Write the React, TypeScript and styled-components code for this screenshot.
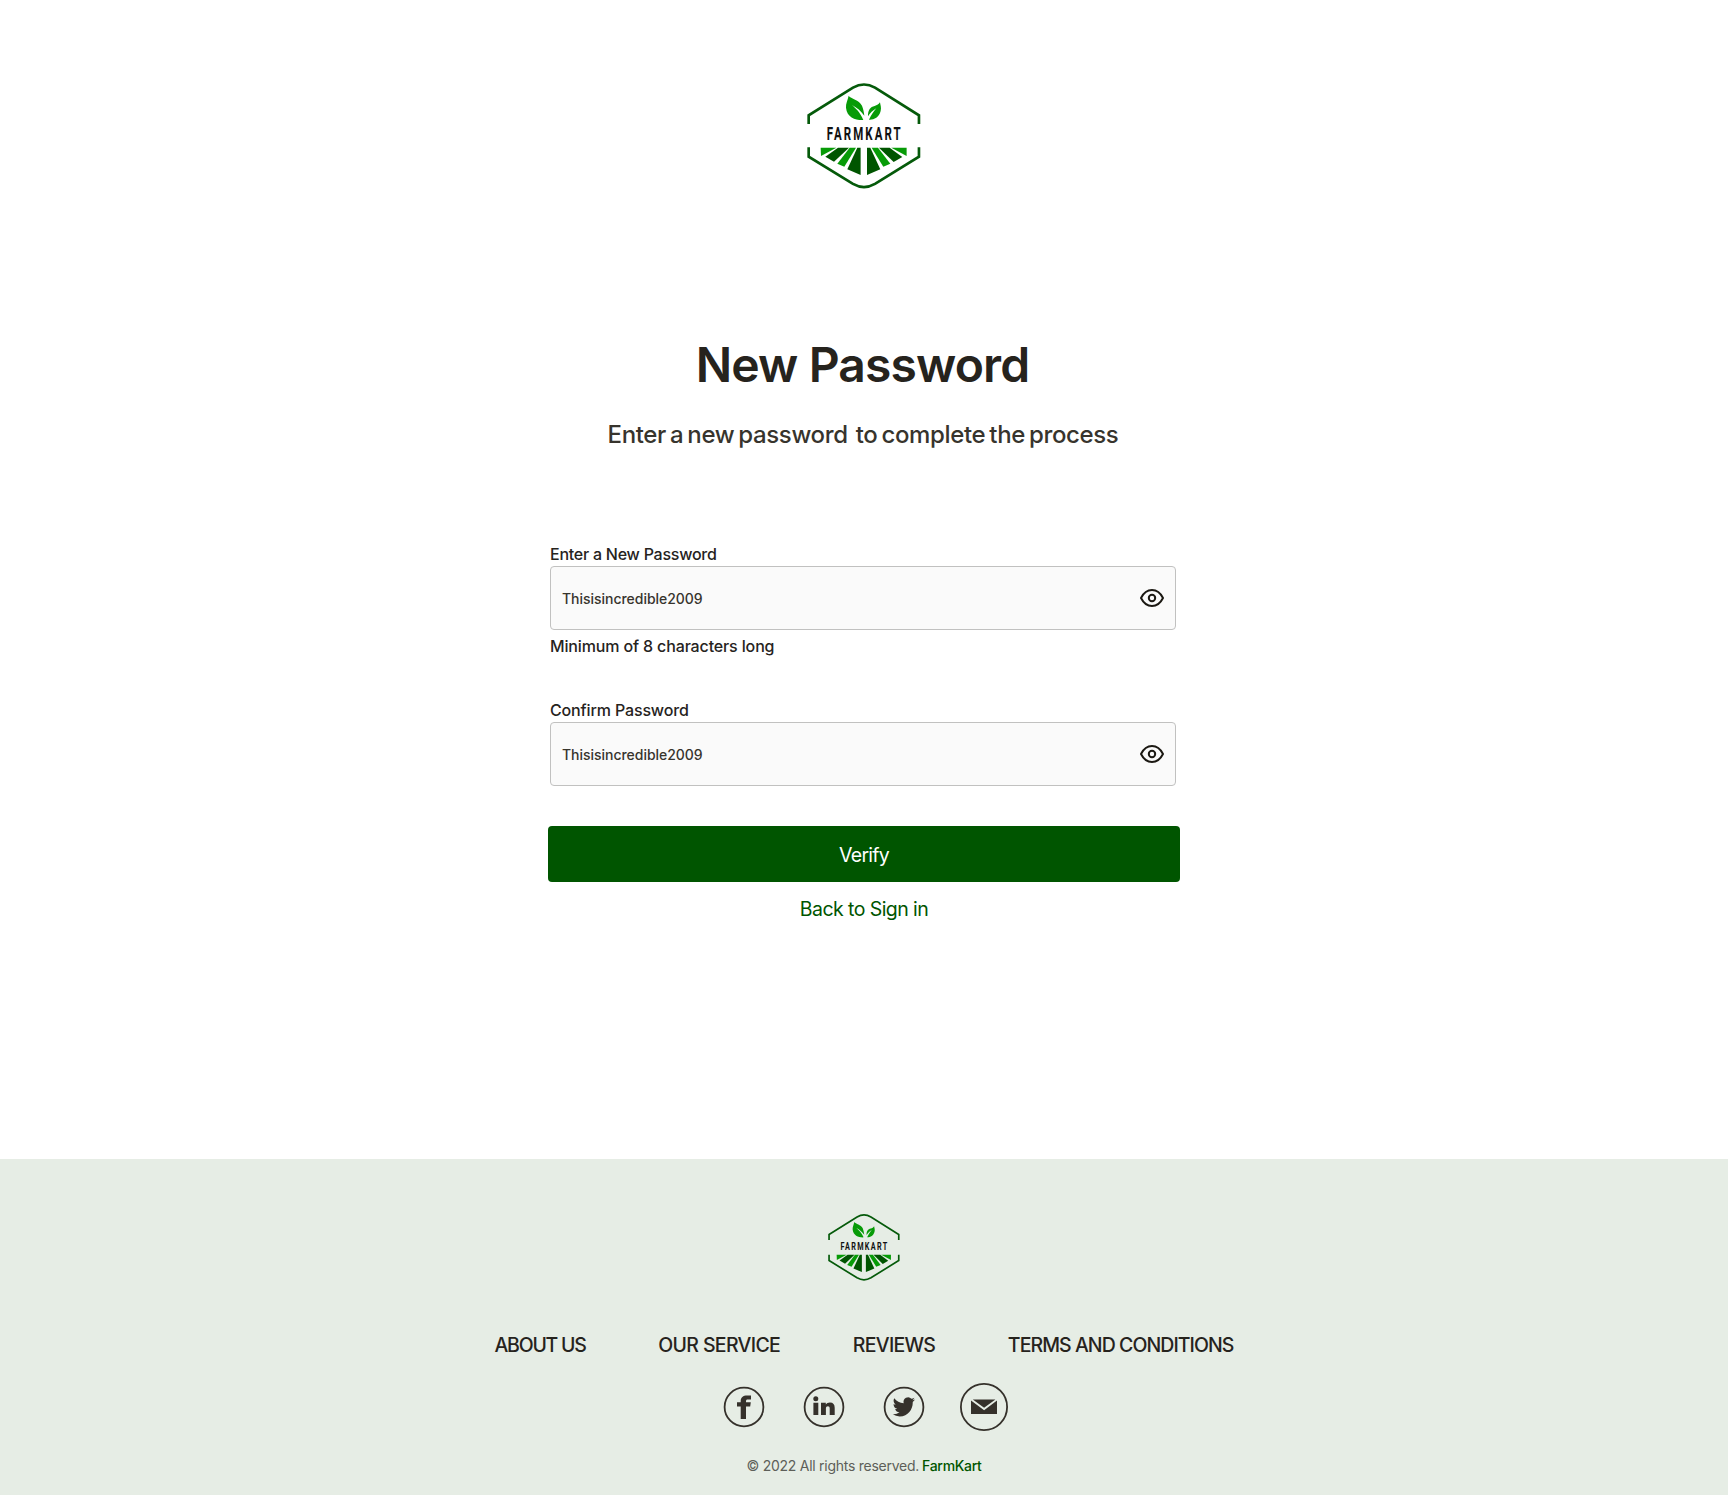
import React from "react";
import styled, { createGlobalStyle } from "styled-components";

const GlobalStyle = createGlobalStyle`
  *, *::before, *::after { box-sizing: border-box; }
  body {
    margin: 0;
    background: #fff;
    font-family: Inter, "Liberation Sans", sans-serif;
    color: #26231d;
  }
`;

const Page = styled.div`
  display: flex;
  flex-direction: column;
  align-items: center;
  width: 100%;
  min-height: 1495px;
`;

const Main = styled.main`
  display: flex;
  flex-direction: column;
  align-items: center;
  width: 632px;
  height: 1159px;
  padding-top: 83px;
`;

const LogoSvg = styled.svg<{ $width: number }>`
  display: block;
  flex: none;
  width: ${(p) => p.$width}px;
  aspect-ratio: 340 / 318;
`;

const Title = styled.h1`
  margin: 143px 3px 0 0;
  font-size: 48px;
  font-weight: 600;
  line-height: 66px;
  letter-spacing: -0.88px;
  white-space: nowrap;
`;

const Subtitle = styled.p`
  margin: 20px 2px 0 0;
  font-size: 24px;
  font-weight: 500;
  line-height: 33px;
  letter-spacing: -0.36px;
  word-spacing: -2px;
  white-space: pre;
  color: #37342d;
`;

const Form = styled.form`
  display: flex;
  flex-direction: column;
  align-items: center;
  width: 100%;
  margin-top: 92px;
`;

const Field = styled.div<{ $gap: number }>`
  display: flex;
  flex-direction: column;
  width: 626px;
  margin: 0 4px 0 2px;
  padding-bottom: ${(p) => p.$gap}px;
`;

const Caption = styled.label<{ $spacing: number }>`
  height: 23px;
  font-size: 16px;
  font-weight: 500;
  line-height: 22px;
  letter-spacing: ${(p) => p.$spacing}px;
`;

const Hint = styled(Caption).attrs({ as: "span" })`
  margin-top: 5px;
`;

const InputBox = styled.div`
  display: flex;
  align-items: center;
  justify-content: space-between;
  height: 64px;
  padding: 0 11px;
  border: 1px solid #c1c1c0;
  border-radius: 4px;
  background: #fafafa;
`;

const Value = styled.span`
  padding-top: 1px;
  font-size: 14px;
  font-weight: 500;
  line-height: 19px;
  letter-spacing: -0.03px;
  color: #37342d;
`;

const Eye = styled.svg`
  display: block;
  width: 24px;
  height: 24px;
  fill: none;
  stroke: #1b1812;
  stroke-width: 2;
  stroke-linejoin: round;
`;

const Submit = styled.button`
  width: 632px;
  height: 56px;
  padding: 3px 0 0;
  border: 0;
  border-radius: 4px;
  background: #005500;
  color: #fff;
  font: 400 19.5px/27px Inter, "Liberation Sans", sans-serif;
  letter-spacing: -0.75px;
`;

const BackLink = styled.a`
  margin-top: 14px;
  font-size: 19.5px;
  line-height: 27px;
  letter-spacing: -0.57px;
  color: #005500;
`;

const FooterBar = styled.footer`
  display: flex;
  flex-direction: column;
  align-items: center;
  width: 100%;
  height: 336px;
  padding-top: 55px;
  background: #e6ede5;
`;

const Nav = styled.nav`
  display: flex;
  gap: 72.6px;
  margin-top: 51px;
`;

const NavLink = styled.a<{ $spacing: number }>`
  font-size: 19.5px;
  font-weight: 500;
  line-height: 27px;
  letter-spacing: ${(p) => p.$spacing}px;
  white-space: nowrap;
`;

const Socials = styled.div`
  display: flex;
  gap: 32px;
  margin-top: 24px;
`;

const SocialIcon = styled.svg`
  display: block;
  width: 48px;
  height: 48px;
  fill: #35312b;
`;

const Copyright = styled.p`
  display: flex;
  gap: 3px;
  margin: 25px 0 0;
  font-size: 14px;
  line-height: 19px;
  letter-spacing: -0.26px;
  color: #5d5f59;
`;

const Brand = styled.span`
  font-weight: 500;
  letter-spacing: -0.307px;
  color: #005500;
`;

function Logo({ width }: { width: number }) {
  return (
    <LogoSvg $width={width} viewBox="40 38 340 318" aria-label="FarmKart">
      <g fill="none" stroke="#055a0a" strokeWidth="8">
        <path d="M45 161V135L178 52Q211 33 244 52L376 135V161" />
        <path d="M45 231V259L178 341Q211 360 244 341L376 259V231" />
      </g>
      <g fill="#079b07">
        <path d="M165 76C172 86 196 88 205 106C209 116 211 126 212 136C202 122 190 112 175 104C186 114 200 126 209 149C186 150 160 142 157 112C156 100 162 90 165 76Z" />
        <path d="M259 96C260 104 264 112 261 122C256 142 240 149 226 148C232 135 240 124 248 114C238 120 229 129 223 138C223 118 230 110 243 107C250 105 256 102 259 96Z" />
        <path d="M81 232H128L82 257Z" />
        <path d="M168 232H187L152 289L131 280Z" />
        <path d="M234 232H253L290 280L269 289Z" />
        <path d="M293 232H339V257Z" />
      </g>
      <g fill="#005500">
        <path d="M133 232H166L121 274L95 259Z" />
        <path d="M191 232H201V314L161 297Z" />
        <path d="M220 232H230L260 297L220 314Z" />
        <path d="M256 232H288L326 260L300 275Z" />
      </g>
      <text
        transform="translate(99 209) scale(0.65 1)"
        fontFamily="Roboto, sans-serif"
        fontSize="53"
        fontWeight="700"
        fill="#111"
        textLength="342"
      >
        FARMKART
      </text>
    </LogoSvg>
  );
}

function PasswordInput({ value }: { value: string }) {
  return (
    <InputBox>
      <Value>{value}</Value>
      <Eye viewBox="0 0 24 24">
        <path d="M1 12C3.5 7 7.5 4 12 4S20.5 7 23 12C20.5 17 16.5 20 12 20S3.5 17 1 12Z" />
        <circle cx="12" cy="12" r="3.2" />
      </Eye>
    </InputBox>
  );
}

function Ring({ r }: { r: number }) {
  return <circle cx="24" cy="24" r={r} fill="none" stroke="#35312b" strokeWidth="1.8" />;
}

const links = [
  { label: "ABOUT US", spacing: -1.22 },
  { label: "OUR SERVICE", spacing: -0.65 },
  { label: "REVIEWS", spacing: -0.71 },
  { label: "TERMS AND CONDITIONS", spacing: -0.93 },
];

export default function App() {
  return (
    <Page>
      <GlobalStyle />
      <Main>
        <Logo width={113.3} />
        <Title>New Password</Title>
        <Subtitle>{"Enter a new password  to complete the process"}</Subtitle>
        <Form>
          <Field $gap={41}>
            <Caption $spacing={-0.242}>Enter a New Password</Caption>
            <PasswordInput value="Thisisincredible2009" />
            <Hint $spacing={-0.14}>Minimum of 8 characters long</Hint>
          </Field>
          <Field $gap={40}>
            <Caption $spacing={-0.14}>Confirm Password</Caption>
            <PasswordInput value="Thisisincredible2009" />
          </Field>
          <Submit type="button">Verify</Submit>
          <BackLink>Back to Sign in</BackLink>
        </Form>
      </Main>
      <FooterBar>
        <Logo width={71.6} />
        <Nav>
          {links.map((link) => (
            <NavLink key={link.label} $spacing={link.spacing}>
              {link.label}
            </NavLink>
          ))}
        </Nav>
        <Socials>
          <SocialIcon viewBox="0 0 48 48">
            <Ring r={19.4} />
            <path d="M31 12.4h-3.8c-4.2 0-6.5 1.9-6.5 5.6v1.2H17v4.2h3.7V36H26V23.4h4.2l.6-4.2H26v-1c0-1.1.5-1.6 1.7-1.6H31z" />
          </SocialIcon>
          <SocialIcon viewBox="0 0 48 48">
            <Ring r={19.4} />
            <circle cx="15.8" cy="15.8" r="2.5" />
            <path d="M13.4 19.7h4.9V32h-4.9zM21 19.7h4.8v1.7c.8-1.3 2.3-2 4.2-2 3.2 0 4.7 1.9 4.7 5.4V32h-5v-6.6c0-1.5-.6-2.2-1.8-2.2s-2 .8-2 2.3V32H21z" />
          </SocialIcon>
          <SocialIcon viewBox="0 0 48 48">
            <Ring r={19.4} />
            <path
              transform="translate(12.7 12.1) scale(0.93 0.98)"
              d="M23.953 4.57a10 10 0 01-2.825.775 4.958 4.958 0 002.163-2.723c-.951.555-2.005.959-3.127 1.184a4.92 4.92 0 00-8.384 4.482C7.69 8.095 4.067 6.13 1.64 3.162a4.822 4.822 0 00-.666 2.475c0 1.71.87 3.213 2.188 4.096a4.904 4.904 0 01-2.228-.616v.06a4.923 4.923 0 003.946 4.827 4.996 4.996 0 01-2.212.085 4.936 4.936 0 004.604 3.417 9.867 9.867 0 01-6.102 2.105c-.39 0-.779-.023-1.17-.067a13.995 13.995 0 007.557 2.209c9.053 0 13.998-7.496 13.998-13.985 0-.21 0-.42-.015-.63A9.935 9.935 0 0024 4.59z"
            />
          </SocialIcon>
          <SocialIcon viewBox="0 0 48 48">
            <Ring r={23.1} />
            <path d="M12.8 16.4H35.4L24.1 24.8zM11 17.6L24.1 27.3 37 17.6V31H11z" />
          </SocialIcon>
        </Socials>
        <Copyright>
          <span>© 2022 All rights reserved.</span>
          <Brand>FarmKart</Brand>
        </Copyright>
      </FooterBar>
    </Page>
  );
}
